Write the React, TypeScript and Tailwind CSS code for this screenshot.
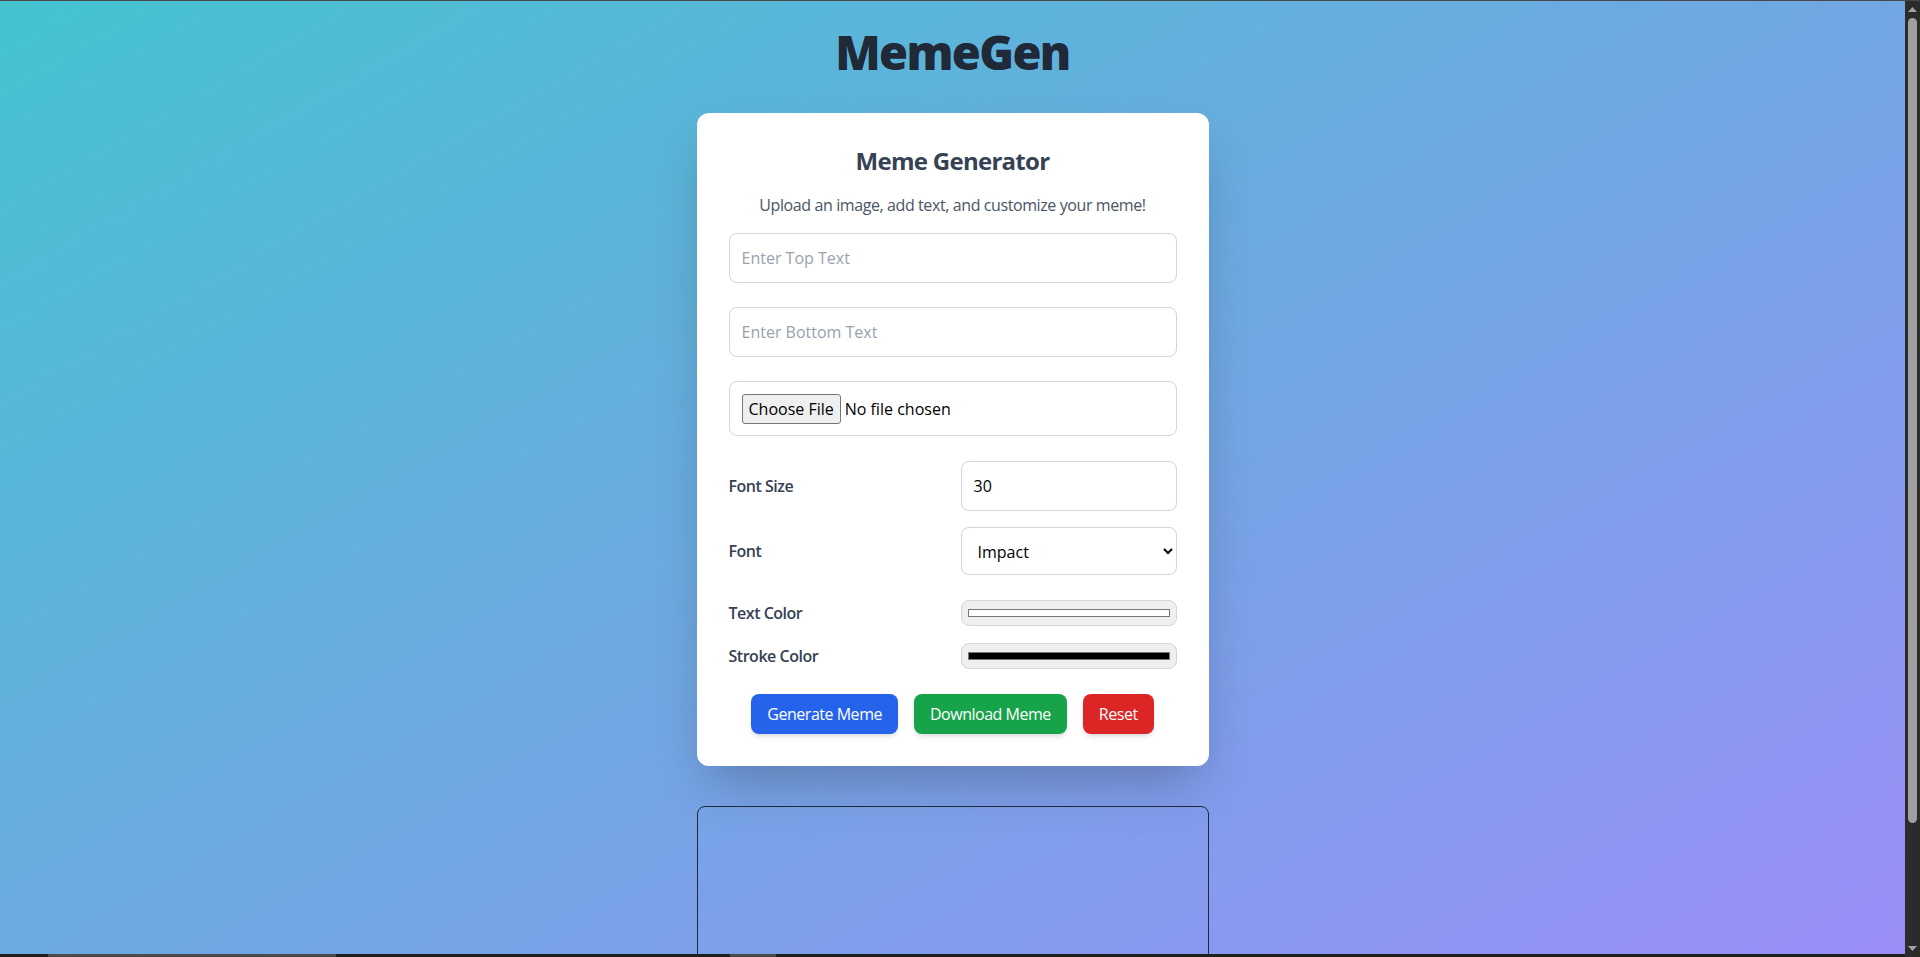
import React from "react";

function Scrollbar() {
  return (
    <div className="w-[15px] shrink-0 bg-[#2b2b2b] flex flex-col items-center">
      <div className="h-[17px] w-full flex items-center justify-center">
        <svg width="9" height="6" viewBox="0 0 9 6">
          <polygon points="4.5,0 9,5 0,5" fill="#a3a3a3" />
        </svg>
      </div>
      <div className="flex-1 w-full px-[3px]">
        <div className="h-[805px] w-full rounded-full bg-[#9f9f9f]" />
      </div>
      <div className="h-[17px] w-full flex items-center justify-center">
        <svg width="9" height="6" viewBox="0 0 9 6">
          <polygon points="0,0 9,0 4.5,5" fill="#a3a3a3" />
        </svg>
      </div>
    </div>
  );
}

export default function App() {
  return (
    <div className="h-screen w-full flex flex-col overflow-hidden bg-[#2b2b2b] font-['Open_Sans',sans-serif]">
      <div className="h-px shrink-0 bg-[#474747]" />
      <div className="flex flex-1 min-h-0">
        <div className="flex-1 min-w-0 flex flex-col">
          <div className="flex-1 min-h-0 overflow-hidden">
            <div className="min-h-[1100px] bg-[linear-gradient(to_bottom_right,#44c3cf,#a08afa)] flex flex-col items-center pt-[27px]">
              <h1 className="text-[47px] h-[48px] leading-[48px] font-extrabold text-[#1f2937] tracking-[-0.035em]">
                MemeGen
              </h1>
              <div className="mt-[37px] w-[512px] bg-white rounded-xl p-8 shadow-2xl">
                <h2 className="text-2xl font-bold text-gray-700 text-center tracking-[-0.03em]">Meme Generator</h2>
                <p className="mt-4 text-base text-gray-600 text-center tracking-[-0.025em]">
                  Upload an image, add text, and customize your meme!
                </p>
                <input
                  type="text"
                  placeholder="Enter Top Text"
                  className="mt-4 block w-full h-[50px] p-3 border border-gray-300 rounded-lg text-base text-gray-800 placeholder:text-gray-400 outline-none"
                />
                <input
                  type="text"
                  placeholder="Enter Bottom Text"
                  className="mt-6 block w-full h-[50px] p-3 border border-gray-300 rounded-lg text-base text-gray-800 placeholder:text-gray-400 outline-none"
                />
                <input
                  type="file"
                  className="mt-6 block w-full h-[55px] p-3 border border-gray-300 rounded-lg text-base text-black file:mr-1 file:px-[6px] file:py-[2px] file:border file:border-solid file:border-[#767676] file:rounded-[3px] file:bg-[#efefef] file:text-black"
                />
                <div className="mt-[25px] grid grid-cols-2 gap-x-4 items-center">
                  <label className="font-semibold text-gray-700 tracking-[-0.03em]">Font Size</label>
                  <input
                    type="number"
                    defaultValue={30}
                    className="block w-full h-[50px] p-3 border border-gray-300 rounded-lg text-base text-black outline-none"
                  />
                </div>
                <div className="mt-4 grid grid-cols-2 gap-x-4 items-center">
                  <label className="font-semibold text-gray-700 tracking-[-0.03em]">Font</label>
                  <select
                    defaultValue="Impact"
                    className="block w-full h-[48px] p-3 border border-gray-300 rounded-lg text-base text-black bg-white outline-none"
                  >
                    <option value="Impact">Impact</option>
                    <option value="Arial">Arial</option>
                    <option value="Comic Sans MS">Comic Sans MS</option>
                    <option value="Times New Roman">Times New Roman</option>
                  </select>
                </div>
                <div className="mt-[25px] grid grid-cols-2 gap-x-4 items-center">
                  <label className="font-semibold text-gray-700 tracking-[-0.03em]">Text Color</label>
                  <input
                    type="color"
                    defaultValue="#ffffff"
                    className="block w-full h-[26px] p-1 border border-gray-300 rounded-lg bg-[#efefef]"
                  />
                </div>
                <div className="mt-[17px] grid grid-cols-2 gap-x-4 items-center">
                  <label className="font-semibold text-gray-700 tracking-[-0.03em]">Stroke Color</label>
                  <input
                    type="color"
                    defaultValue="#000000"
                    className="block w-full h-[26px] p-1 border border-gray-300 rounded-lg bg-[#efefef]"
                  />
                </div>
                <div className="mt-[25px] flex justify-center gap-4">
                  <button className="h-10 px-4 rounded-lg bg-[#2563eb] text-white shadow-md tracking-[-0.03em]">
                    Generate Meme
                  </button>
                  <button className="h-10 px-4 rounded-lg bg-[#16a34a] text-white shadow-md tracking-[-0.03em]">
                    Download Meme
                  </button>
                  <button className="h-10 px-4 rounded-lg bg-[#dc2626] text-white shadow-md tracking-[-0.03em]">
                    Reset
                  </button>
                </div>
              </div>
              <div className="mt-10 w-[512px] h-[260px] border border-[#1f2937] rounded-lg" />
            </div>
          </div>
          <div className="h-[3px] shrink-0 bg-[#1f1f1f] flex">
            <div className="w-[48px]" />
            <div className="w-[288px] bg-[#4a4a4a]" />
            <div className="w-[394px]" />
            <div className="w-[46px] bg-[#4a4a4a]" />
          </div>
        </div>
        <Scrollbar />
      </div>
    </div>
  );
}
